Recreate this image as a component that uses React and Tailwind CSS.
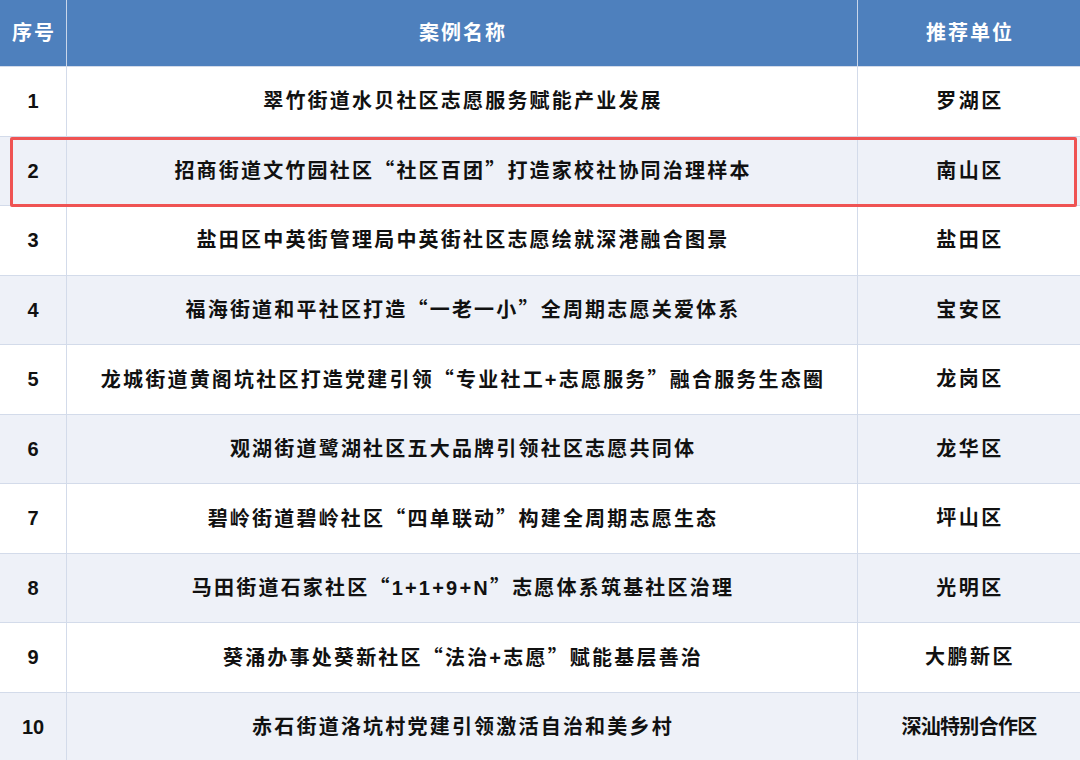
import React from "react";

const rows = [
  ["1", "翠竹街道水贝社区志愿服务赋能产业发展", "罗湖区"],
  ["2", "招商街道文竹园社区“社区百团”打造家校社协同治理样本", "南山区"],
  ["3", "盐田区中英街管理局中英街社区志愿绘就深港融合图景", "盐田区"],
  ["4", "福海街道和平社区打造“一老一小”全周期志愿关爱体系", "宝安区"],
  ["5", "龙城街道黄阁坑社区打造党建引领“专业社工+志愿服务”融合服务生态圈", "龙岗区"],
  ["6", "观湖街道鹭湖社区五大品牌引领社区志愿共同体", "龙华区"],
  ["7", "碧岭街道碧岭社区“四单联动”构建全周期志愿生态", "坪山区"],
  ["8", "马田街道石家社区“1+1+9+N”志愿体系筑基社区治理", "光明区"],
  ["9", "葵涌办事处葵新社区“法治+志愿”赋能基层善治", "大鹏新区"],
  ["10", "赤石街道洛坑村党建引领激活自治和美乡村", "深汕特别合作区"],
];

function Name({ text }) {
  const parts = text.split(/([“”])/);
  return (
    <span>
      {parts.map((p, i) =>
        p === "“" || p === "”" ? (
          <span key={i} style={{ fontFamily: '"Noto Sans CJK SC", sans-serif' }}>
            {p}
          </span>
        ) : (
          <span key={i}>{p}</span>
        )
      )}
    </span>
  );
}

export default function App() {
  return (
    <div
      className="relative w-[1080px] h-[760px] overflow-hidden bg-white"
      style={{ fontFamily: '"Liberation Sans", "Noto Sans CJK SC", sans-serif' }}
    >
      <div className="grid grid-cols-[67px_791px_222px] h-[66px] bg-[#4e80bd] text-white text-[20px] font-bold tracking-[2px]">
        <div className="flex items-center justify-center border-r border-[#c9d6ea] pl-[2px]">序号</div>
        <div className="flex items-center justify-center border-r border-[#c9d6ea] pl-[2px]">案例名称</div>
        <div className="flex items-center justify-center pl-[2px]">推荐单位</div>
      </div>
      {rows.map((r, i) => (
        <div
          key={r[0]}
          className={
            "grid grid-cols-[67px_791px_222px] h-[69.5px] border-t border-[#d3dbea] text-[#111] text-[20px] font-bold " +
            (i % 2 === 1 ? "bg-[#eef1f8]" : "bg-white")
          }
        >
          <div className="flex items-center justify-center border-r border-[#d3dbea]">{r[0]}</div>
          <div className="flex items-center justify-center border-r border-[#d3dbea] tracking-[2.2px] pl-[2px]">
            <Name text={r[1]} />
          </div>
          <div
            className={
              "flex items-center justify-center " +
              (r[2].length > 5 ? "tracking-[-0.7px]" : "tracking-[2.5px] pl-[2px]")
            }
          >
            {r[2]}
          </div>
        </div>
      ))}
      <div className="absolute left-[10px] top-[137px] w-[1067px] h-[70px] border-[3px] border-[#ef5353] rounded-[2px]" />
    </div>
  );
}
